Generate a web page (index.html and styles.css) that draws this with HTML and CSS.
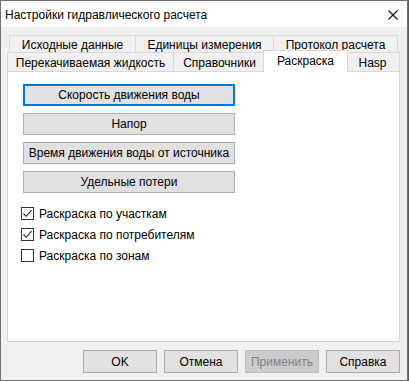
FILE: index.html
```html
<!DOCTYPE html>
<html lang="ru">
<head>
    <meta charset="UTF-8">
    <title>Настройки гидравлического расчета</title>
    <link rel="stylesheet" href="styles.css">
</head>
<body>
<div class="dialog">
    <div class="dialog__title">
        <span>Настройки гидравлического расчета</span>
        <svg class="dialog__close" width="10" height="10" viewBox="0 0 10 10">
            <path d="M0.5 0.5 L9.5 9.5 M9.5 0.5 L0.5 9.5" stroke="#111" stroke-width="1.1" fill="none"/>
        </svg>
    </div>
    <div class="dialog__body">
        <div class="tabs">
            <div class="tabs__row tabs__row--back">
                <div class="tab tab--w127">Исходные данные</div>
                <div class="tab tab--w139">Единицы измерения</div>
                <div class="tab tab--w125">Протокол расчета</div>
            </div>
            <div class="tabs__row">
                <div class="tab tab--w167">Перекачиваемая жидкость</div>
                <div class="tab tab--w93">Справочники</div>
                <div class="tab tab--active">Раскраска</div>
                <div class="tab tab--hasp">Hasp</div>
            </div>
        </div>
        <div class="panel">
            <div class="panel__buttons">
                <button class="btn btn--wide btn--focus">Скорость движения воды</button>
                <button class="btn btn--wide">Напор</button>
                <button class="btn btn--wide">Время движения воды от источника</button>
                <button class="btn btn--wide">Удельные потери</button>
            </div>
            <div class="panel__checks">
                <label class="check">
                    <span class="check__box">
                        <svg width="11" height="11" viewBox="0 0 11 11"><path d="M1.5 5.5 L4.2 8.3 L9.6 2.2" stroke="#222" stroke-width="1.1" fill="none"/></svg>
                    </span>
                    Раскраска по участкам
                </label>
                <label class="check">
                    <span class="check__box">
                        <svg width="11" height="11" viewBox="0 0 11 11"><path d="M1.5 5.5 L4.2 8.3 L9.6 2.2" stroke="#222" stroke-width="1.1" fill="none"/></svg>
                    </span>
                    Раскраска по потребителям
                </label>
                <label class="check">
                    <span class="check__box"></span>
                    Раскраска по зонам
                </label>
            </div>
        </div>
        <div class="dialog__footer">
            <button class="btn btn--small">OK</button>
            <button class="btn btn--small">Отмена</button>
            <button class="btn btn--small btn--disabled">Применить</button>
            <button class="btn btn--small">Справка</button>
        </div>
    </div>
</div>
</body>
</html>
```

FILE: styles.css
```css
:root {
    --color-face: #f0f0f0;
    --color-line: #d9d9d9;
    --color-btn: #e1e1e1;
    --color-btn-line: #adadad;
    --color-focus: #0078d7;
}

* {
    margin: 0;
    padding: 0;
    box-sizing: border-box;
}

body {
    background: #5c5c5c;
    font-family: "Liberation Sans", Arial, sans-serif;
    font-size: 12px;
    color: #000;
}

.dialog {
    display: flex;
    flex-direction: column;
    width: 408px;
    height: 381px;
    border: 1px solid #707070;
    background: var(--color-face);
}

.dialog__title {
    display: flex;
    align-items: center;
    justify-content: space-between;
    height: 26px;
    padding: 0 9px 0 4px;
    background: #fff;
}

.dialog__title span {
    padding-top: 1px;
}

.dialog__close {
    margin-top: 1px;
}

.dialog__body {
    display: flex;
    flex-direction: column;
    flex: 1;
    padding: 8px 7px 7px 6px;
}

/* tabs */
.tabs__row {
    display: flex;
    align-items: flex-end;
    height: 19px;
}

.tabs__row--back {
    height: 17px;
    margin-left: 2px;
}

.tab {
    display: flex;
    align-items: center;
    justify-content: center;
    height: 100%;
    margin-left: -1px;
    border: 1px solid var(--color-line);
    border-bottom: none;
    background: var(--color-face);
    white-space: nowrap;
}

.tab:first-child {
    margin-left: 0;
}

.tabs__row--back .tab {
    padding-top: 1px;
}

.tabs__row:not(.tabs__row--back) .tab {
    padding-top: 2px;
}

.tab--w127 { width: 127px; }
.tab--w139 { width: 139px; }
.tab--w125 { width: 125px; }
.tab--w167 { width: 167px; }
.tab--w93 { width: 93px; }

.tab.tab--active {
    position: relative;
    z-index: 1;
    width: 85px;
    height: 22px;
    margin-left: -3px;
    margin-bottom: -1px;
    padding-top: 0;
    padding-bottom: 3px;
    background: #fff;
}

.tab--hasp {
    width: 55px;
    margin-left: -3px;
}

/* panel */
.panel {
    display: flex;
    flex-direction: column;
    height: 271px;
    width: 393px;
    padding: 12px 15px;
    border: 1px solid var(--color-line);
    background: #fff;
}

.panel__buttons {
    display: flex;
    flex-direction: column;
    gap: 7px;
}

.btn {
    display: flex;
    align-items: center;
    justify-content: center;
    font: inherit;
    color: #000;
    background: var(--color-btn);
    border: 1px solid var(--color-btn-line);
}

.btn--wide {
    width: 212px;
    height: 22px;
}

.btn--focus {
    border: 2px solid var(--color-focus);
}

.btn--small {
    width: 74px;
    height: 23px;
}

.btn--disabled {
    color: #838383;
    background: #cccccc;
    border-color: #bfbfbf;
}

.panel__checks {
    display: flex;
    flex-direction: column;
    gap: 8px;
    margin-top: 14px;
    margin-left: -2px;
}

.check {
    display: flex;
    align-items: center;
    gap: 5px;
    height: 13px;
}

.check__box {
    display: flex;
    align-items: center;
    justify-content: center;
    width: 13px;
    height: 13px;
    border: 1px solid #333;
    background: #fff;
}

.dialog__footer {
    display: flex;
    justify-content: flex-end;
    gap: 7px;
    margin-top: 8px;
}
```
